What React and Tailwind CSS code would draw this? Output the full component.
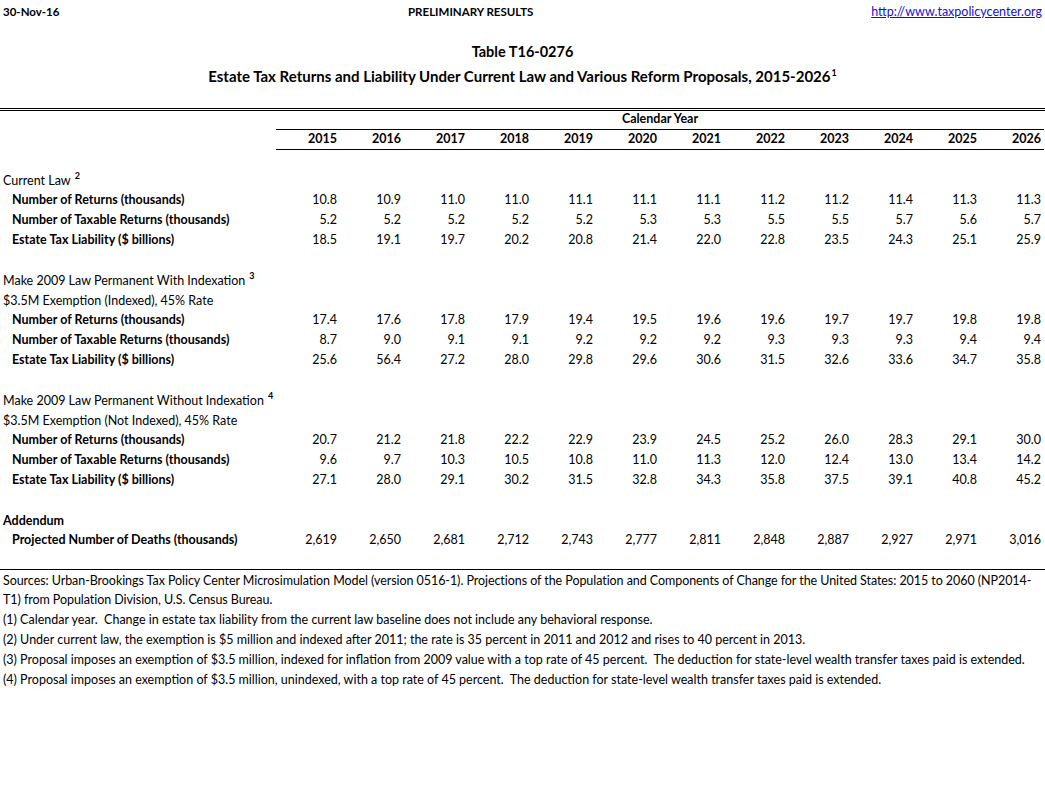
const YEARS = [2015, 2016, 2017, 2018, 2019, 2020, 2021, 2022, 2023, 2024, 2025, 2026]

const SECTIONS = [
  {
    titles: [{ text: 'Current Law', note: '2' }],
    rows: [
      ['Number of Returns (thousands)', '10.8', '10.9', '11.0', '11.0', '11.1', '11.1', '11.1', '11.2', '11.2', '11.4', '11.3', '11.3'],
      ['Number of Taxable Returns (thousands)', '5.2', '5.2', '5.2', '5.2', '5.2', '5.3', '5.3', '5.5', '5.5', '5.7', '5.6', '5.7'],
      ['Estate Tax Liability ($ billions)', '18.5', '19.1', '19.7', '20.2', '20.8', '21.4', '22.0', '22.8', '23.5', '24.3', '25.1', '25.9'],
    ],
  },
  {
    titles: [
      { text: 'Make 2009 Law Permanent With Indexation', note: '3' },
      { text: '$3.5M Exemption (Indexed), 45% Rate' },
    ],
    rows: [
      ['Number of Returns (thousands)', '17.4', '17.6', '17.8', '17.9', '19.4', '19.5', '19.6', '19.6', '19.7', '19.7', '19.8', '19.8'],
      ['Number of Taxable Returns (thousands)', '8.7', '9.0', '9.1', '9.1', '9.2', '9.2', '9.2', '9.3', '9.3', '9.3', '9.4', '9.4'],
      ['Estate Tax Liability ($ billions)', '25.6', '56.4', '27.2', '28.0', '29.8', '29.6', '30.6', '31.5', '32.6', '33.6', '34.7', '35.8'],
    ],
  },
  {
    titles: [
      { text: 'Make 2009 Law Permanent Without Indexation', note: '4' },
      { text: '$3.5M Exemption (Not Indexed), 45% Rate' },
    ],
    rows: [
      ['Number of Returns (thousands)', '20.7', '21.2', '21.8', '22.2', '22.9', '23.9', '24.5', '25.2', '26.0', '28.3', '29.1', '30.0'],
      ['Number of Taxable Returns (thousands)', '9.6', '9.7', '10.3', '10.5', '10.8', '11.0', '11.3', '12.0', '12.4', '13.0', '13.4', '14.2'],
      ['Estate Tax Liability ($ billions)', '27.1', '28.0', '29.1', '30.2', '31.5', '32.8', '34.3', '35.8', '37.5', '39.1', '40.8', '45.2'],
    ],
  },
  {
    titles: [{ text: 'Addendum', bold: true }],
    rows: [
      ['Projected Number of Deaths (thousands)', '2,619', '2,650', '2,681', '2,712', '2,743', '2,777', '2,811', '2,848', '2,887', '2,927', '2,971', '3,016'],
    ],
  },
]

const NOTES = [
  '(1) Calendar year.  Change in estate tax liability from the current law baseline does not include any behavioral response.',
  '(2) Under current law, the exemption is $5 million and indexed after 2011; the rate is 35 percent in 2011 and 2012 and rises to 40 percent in 2013.',
  '(3) Proposal imposes an exemption of $3.5 million, indexed for inflation from 2009 value with a top rate of 45 percent.  The deduction for state-level wealth transfer taxes paid is extended.',
  '(4) Proposal imposes an exemption of $3.5 million, unindexed, with a top rate of 45 percent.  The deduction for state-level wealth transfer taxes paid is extended.',
]

const GRID = 'grid grid-cols-[276px_repeat(12,64px)]'

function Sup({ n, gap }) {
  return (
    <span className={'relative -top-[6px] text-[9px] font-bold ' + (gap ? 'ml-[4px]' : 'ml-[1px]')}>{n}</span>
  )
}

export default function App() {
  return (
    <div className="w-[1045px] h-[791px] bg-white text-black font-['Lato',sans-serif] text-[12.5px] leading-none">
      {/* page header */}
      <div className="h-6 px-[3px] grid grid-cols-[405px_1fr_auto] items-center font-bold text-[11.5px]">
        <span>30-Nov-16</span>
        <span>PRELIMINARY RESULTS</span>
        <span className="font-normal text-[12.5px] text-[#1a0dcc] underline">http://www.taxpolicycenter.org</span>
      </div>

      <div className="mt-[21px] text-center font-bold text-[14.5px]">Table T16-0276</div>
      <div className="mt-[9px] text-center font-bold text-[15px]">
        Estate Tax Returns and Liability Under Current Law and Various Reform Proposals, 2015-2026<Sup n="1" />
      </div>

      {/* table */}
      <div className="mt-[24px] border-t-[3px] border-double border-black">
        <div className={GRID + ' h-[19px]'}>
          <div />
          <div className="col-span-12 border-b border-black flex items-center justify-center font-bold">Calendar Year</div>
        </div>
        <div className={GRID + ' h-5'}>
          <div />
          {YEARS.map(y => (
            <div key={y} className="border-b border-black flex items-center justify-end pr-[3px] font-bold">{y}</div>
          ))}
        </div>
        <div className="h-[21px]" />

        {SECTIONS.map((s, i) => (
          <div key={i} className={i > 0 ? 'mt-5' : ''}>
            {s.titles.map(t => (
              <div key={t.text} className={'h-5 leading-5 pl-[3px] whitespace-nowrap ' + (t.bold ? 'font-bold' : '')}>
                {t.text}
                {t.note && <Sup n={t.note} gap />}
              </div>
            ))}
            {s.rows.map(r => (
              <div key={r[0]} className={GRID + ' h-5 items-center'}>
                <div className="pl-3 font-bold">{r[0]}</div>
                {r.slice(1).map((v, j) => (
                  <div key={j} className="text-right pr-[3px]">{v}</div>
                ))}
              </div>
            ))}
          </div>
        ))}

        <div className="h-[18px]" />
      </div>

      {/* footnotes */}
      <div className="border-t border-black px-[3px] pt-[1px]">
        <p className="leading-[19px] whitespace-nowrap tracking-[-0.005em]">
          Sources: Urban-Brookings Tax Policy Center Microsimulation Model (version 0516-1). Projections of the Population and Components of Change for the United States: 2015 to 2060 (NP2014-
          <br />
          T1) from Population Division, U.S. Census Bureau.
        </p>
        <div className="mt-[2px]">
          {NOTES.map(n => (
            <p key={n} className="h-5 flex items-center whitespace-pre">{n}</p>
          ))}
        </div>
      </div>
    </div>
  )
}
